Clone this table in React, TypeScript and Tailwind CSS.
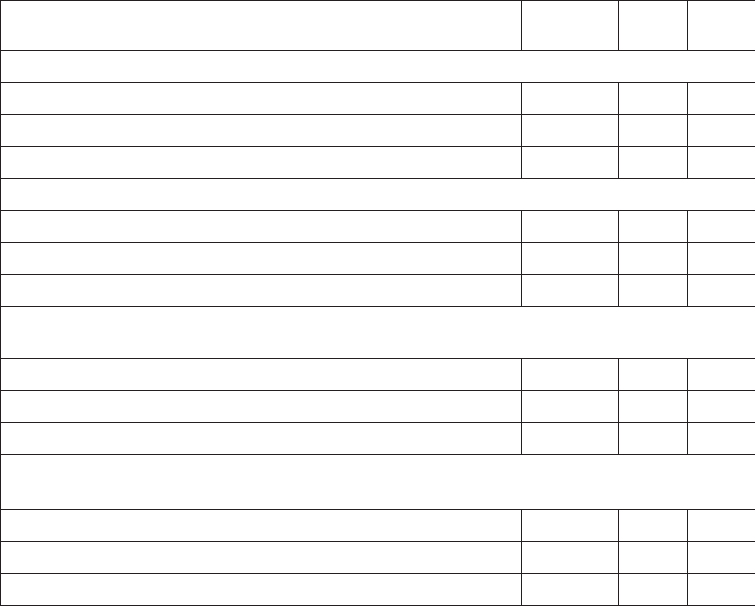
import React from "react"

type Section = { tall?: number; rows: number }

const sections: Section[] = [
  { rows: 3 },
  { rows: 3 },
  { tall: 52, rows: 3 },
  { tall: 55, rows: 3 },
]

const cell = "border border-[#231f20] p-0"

export default function App() {
  return (
    <div className="w-[755px] bg-white font-['Liberation_Sans',sans-serif]">
      <table className="w-[755px] table-fixed border-collapse">
        <colgroup>
          <col className="w-[521px]" />
          <col className="w-[97px]" />
          <col className="w-[69px]" />
          <col className="w-[68px]" />
        </colgroup>
        <thead>
          <tr className="h-[50px]">
            <th className={cell}></th>
            <th className={cell}></th>
            <th className={cell}></th>
            <th className={cell}></th>
          </tr>
        </thead>
        <tbody>
          {sections.map((s, i) => (
            <React.Fragment key={i}>
              <tr style={{ height: s.tall ?? 32 }}>
                <td colSpan={4} className={cell}></td>
              </tr>
              {Array.from({ length: s.rows }).map((_, j) => (
                <tr key={j} className="h-[32px]">
                  <td className={cell}></td>
                  <td className={cell}></td>
                  <td className={cell}></td>
                  <td className={cell}></td>
                </tr>
              ))}
            </React.Fragment>
          ))}
        </tbody>
      </table>
    </div>
  )
}
